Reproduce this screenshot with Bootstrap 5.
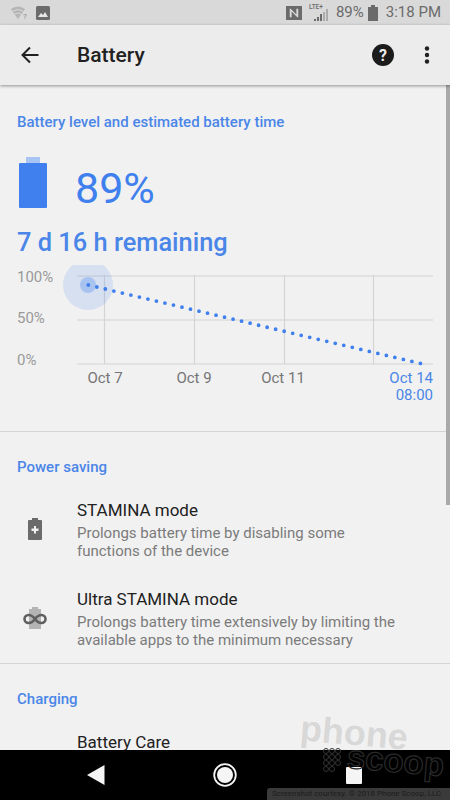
<!DOCTYPE html>
<html lang="en">
<head>
    <meta charset="UTF-8">
    <meta name="viewport" content="width=device-width, initial-scale=1.0">
    <title>Battery</title>
    <link href="https://cdn.jsdelivr.net/npm/bootstrap@5.3.0/dist/css/bootstrap.min.css" rel="stylesheet">
    <script src="https://cdn.jsdelivr.net/npm/bootstrap@5.3.0/dist/js/bootstrap.bundle.min.js"></script>
    <style>
        html, body {
            height: 100%;
            overflow: hidden;
        }

        body {
            font-family: Roboto, "Liberation Sans", sans-serif;
            background: #f1f1f1;
        }

        .phone-screen {
            width: 450px;
            height: 800px;
        }

        /* Status bar */
        .status-strip {
            height: 25px;
            background: #d9d9d9;
            color: #6b6b6b;
            font-size: 15px;
            padding: 0 9px 0 11px;
        }

        .nfc-mark {
            margin-right: 7px;
        }

        .signal-box {
            width: 19px;
            height: 17px;
        }

        .lte-tag {
            font-size: 6.5px;
            font-weight: 500;
            line-height: 1;
        }

        /* App bar */
        .app-strip {
            height: 60px;
            background: #ececec;
            box-shadow: 0 1px 3px rgba(0, 0, 0, .4);
            z-index: 2;
            padding: 0 20px 0 21px;
        }

        .app-name {
            font-size: 21px;
            font-weight: 500;
            color: #212121;
            margin-left: 38px;
            margin-top: 2px;
        }

        .overflow-dots {
            margin-left: 30px;
        }

        /* Content */
        .settings-pane {
            min-height: 0;
            overflow: hidden;
        }

        .scroll-thumb {
            top: 85px;
            right: 0;
            width: 4px;
            height: 420px;
            background: #a9a9a9;
            z-index: 1;
        }

        .group-head {
            font-size: 15px;
            font-weight: 500;
            color: #4a86e8;
            line-height: 20px;
            padding-left: 17px;
            margin-top: 25px;
        }

        .group-head-first {
            margin-top: 27px;
        }

        .level-row {
            height: 52px;
            margin-top: 25px;
            padding-left: 19px;
        }

        .level-num {
            font-size: 43px;
            color: #3f80ee;
            line-height: 52px;
            margin-left: 28px;
            margin-top: 5px;
        }

        .remain-text {
            font-size: 25.4px;
            font-weight: 500;
            color: #4a86e8;
            line-height: 30px;
            padding-left: 17px;
            margin-top: 18px;
        }

        .chart-box {
            display: block;
            margin-top: 3px;
        }

        .chart-box text {
            font-family: Roboto, "Liberation Sans", sans-serif;
            font-size: 15px;
        }

        .group-rule {
            border-top: 1px solid #d4d4d4;
        }

        .rule-after-chart {
            margin-top: 21px;
        }

        .pref-row {
            height: 89px;
            margin-top: 22px;
        }

        .pref-row-last {
            height: 75px;
            margin-top: 0;
        }

        .pref-icon {
            width: 77px;
            flex: none;
            padding-top: 19px;
        }

        .pref-title {
            font-size: 17px;
            color: #212121;
            line-height: 22px;
        }

        .pref-title-solo {
            margin-top: 22px;
            padding-left: 77px;
        }

        .pref-desc {
            font-size: 15px;
            color: #7b7b7b;
            line-height: 17.5px;
            margin-top: 4px;
        }

        /* Bottom navigation */
        .nav-strip {
            height: 50px;
            background: #000;
            z-index: 2;
            padding-left: 87px;
        }

        .nav-home {
            margin-left: 108px;
        }

        .nav-recent {
            margin-left: 109px;
        }

        /* Watermark */
        .mark-phone, .mark-scoop {
            font-family: "Liberation Sans", sans-serif;
            font-weight: 700;
            line-height: 1;
            transform: rotate(5deg);
            z-index: 3;
            white-space: nowrap;
        }

        .mark-phone {
            top: 715px;
            left: 300px;
            font-size: 36px;
            color: rgba(130, 130, 130, .24);
        }

        .mark-scoop {
            top: 744px;
            left: 347px;
            font-size: 33px;
            color: transparent;
            -webkit-text-stroke: 1.2px #2a2a2a;
        }

        .mark-dots {
            top: 748px;
            left: 323px;
            z-index: 3;
        }

        .mark-line {
            left: 267px;
            right: 0;
            bottom: 0;
            height: 12px;
            background: #3a3a3a;
            border-top-left-radius: 3px;
            color: #1c1c1c;
            font-size: 8px;
            line-height: 12px;
            padding-left: 5px;
            z-index: 4;
            white-space: nowrap;
        }
    </style>
</head>
<body>
    <div class="phone-screen position-relative d-flex flex-column overflow-hidden">

        <!-- Status bar -->
        <div class="status-strip d-flex align-items-center flex-shrink-0">
            <svg width="17" height="14" viewBox="0 0 17 14">
                <path d="M0 3 Q7 -2 14 3 L7 13Z" fill="#b5b5b5"/>
                <path d="M2 5 Q7 2 12 5M4 8 Q7 6 10 8" stroke="#d9d9d9" fill="none"/>
                <text x="12" y="13" font-size="8" fill="#8a8a8a">?</text>
            </svg>
            <svg class="ms-2" width="14" height="14" viewBox="0 0 14 14">
                <rect width="14" height="14" rx="1.5" fill="#6b6b6b"/>
                <path d="M2 11 L5 7 L7 9 L9 6 L12 11Z" fill="#e6e6e6"/>
            </svg>
            <svg class="nfc-mark ms-auto" width="16" height="16" viewBox="0 0 17 17">
                <path d="M0 1 H17 V16 H0Z M4 4 V13 H6 V7 L12 13 H13 V4 H11 V10 L5 4Z" fill="#6b6b6b" fill-rule="evenodd"/>
            </svg>
            <span class="signal-box position-relative d-inline-flex">
                <span class="lte-tag position-absolute top-0 start-0">LTE+</span>
                <svg class="position-absolute bottom-0 end-0" width="14" height="12" viewBox="0 0 14 12">
                    <path d="M0 12 V10 H2 V12Z M3 12 V8 H5 V12Z M6 12 V5 H8 V12Z" fill="#6b6b6b"/>
                    <path d="M9 12 V3 H11 V12Z M12 12 V0 H14 V12Z" fill="#ababab"/>
                </svg>
            </span>
            <span class="ms-2">89%</span>
            <svg class="ms-1" width="10" height="16" viewBox="0 0 10 16">
                <path d="M3 0 H7 V2 H10 V16 H0 V2 H3Z" fill="#6b6b6b"/>
            </svg>
            <span class="ms-2">3:18 PM</span>
        </div>

        <!-- App bar -->
        <div class="app-strip d-flex align-items-center flex-shrink-0 position-relative">
            <svg width="18" height="18" viewBox="0 0 18 18">
                <path d="M17.5 9 H2 M9 1.5 L1.5 9 L9 16.5" fill="none" stroke="#212121" stroke-width="2"/>
            </svg>
            <span class="app-name">Battery</span>
            <svg class="ms-auto" width="22" height="22" viewBox="0 0 22 22">
                <circle cx="11" cy="11" r="11" fill="#1b1b1b"/>
                <text x="11" y="16.5" text-anchor="middle" font-size="16" font-weight="700" font-family="Roboto, sans-serif" fill="#ececec">?</text>
            </svg>
            <svg class="overflow-dots" width="6" height="18" viewBox="0 0 6 18">
                <circle cx="3" cy="2.5" r="2.2" fill="#212121"/>
                <circle cx="3" cy="9" r="2.2" fill="#212121"/>
                <circle cx="3" cy="15.5" r="2.2" fill="#212121"/>
            </svg>
        </div>

        <div class="scroll-thumb position-absolute"></div>

        <!-- Settings content -->
        <div class="settings-pane flex-grow-1">
            <div class="group-head group-head-first">Battery level and estimated battery time</div>

            <div class="level-row d-flex align-items-start">
                <svg width="28" height="52" viewBox="0 0 28 52">
                    <rect x="7" y="0" width="14" height="7" fill="#a8c4f4"/>
                    <rect x="0" y="6" width="28" height="45" rx="1" fill="#3f80ee"/>
                </svg>
                <span class="level-num">89%</span>
            </div>

            <div class="remain-text">7 d 16 h remaining</div>

            <!-- Usage chart -->
            <svg class="chart-box" width="450" height="150" viewBox="0 260 450 150">
                <defs>
                    <clipPath id="haloClip"><rect x="0" y="265" width="450" height="60"/></clipPath>
                </defs>
                <g stroke="#d4d4d4" stroke-width="1.2">
                    <path d="M77 276 H433 M77 320 H433 M77 364 H433"/>
                    <path d="M104.5 275 V364 M194.5 275 V364 M284.5 275 V364 M373.5 275 V364"/>
                </g>
                <circle cx="88" cy="285" r="25" fill="#3f80ee" fill-opacity=".15" clip-path="url(#haloClip)"/>
                <circle cx="88" cy="285" r="8" fill="#3f80ee" fill-opacity=".3"/>
                <line x1="88.3" y1="285" x2="421" y2="363.6" stroke="#3f80ee" stroke-width="3.8" stroke-linecap="round" stroke-dasharray="0 8.75"/>
                <g fill="#9a9a9a">
                    <text x="17" y="282">100%</text>
                    <text x="17" y="323">50%</text>
                    <text x="17" y="365">0%</text>
                </g>
                <g fill="#757575" text-anchor="middle">
                    <text x="105" y="383">Oct 7</text>
                    <text x="194" y="383">Oct 9</text>
                    <text x="283" y="383">Oct 11</text>
                </g>
                <g fill="#4a86e8" text-anchor="end">
                    <text x="433" y="383">Oct 14</text>
                    <text x="433" y="400">08:00</text>
                </g>
            </svg>

            <div class="group-rule rule-after-chart"></div>

            <div class="group-head">Power saving</div>

            <div class="pref-row d-flex">
                <div class="pref-icon d-flex justify-content-center pe-2">
                    <svg width="14" height="22" viewBox="0 0 14 22">
                        <path d="M4 0 H10 V2 H13 Q14 2 14 3 V21 Q14 22 13 22 H1 Q0 22 0 21 V3 Q0 2 1 2 H4Z M6 8 V10.5 H3.5 V13 H6 V15.5 H8 V13 H10.5 V10.5 H8 V8Z" fill="#6b6b6b" fill-rule="evenodd"/>
                    </svg>
                </div>
                <div>
                    <div class="pref-title">STAMINA mode</div>
                    <div class="pref-desc">Prolongs battery time by disabling some<br>functions of the device</div>
                </div>
            </div>

            <div class="pref-row pref-row-last d-flex">
                <div class="pref-icon d-flex justify-content-center pe-2">
                    <svg width="24" height="22" viewBox="0 0 24 22">
                        <path d="M9 0 H15 V2 H18 V22 H6 V2 H9Z" fill="#b4b4b4"/>
                        <path d="M12 12 C9 8 7.5 8 5.5 8 A4 4 0 0 0 5.5 16 C7.5 16 9 16 12 12 C15 8 16.5 8 18.5 8 A4 4 0 0 1 18.5 16 C16.5 16 15 16 12 12Z" fill="none" stroke="#5f5f5f" stroke-width="2.6"/>
                    </svg>
                </div>
                <div>
                    <div class="pref-title">Ultra STAMINA mode</div>
                    <div class="pref-desc">Prolongs battery time extensively by limiting the<br>available apps to the minimum necessary</div>
                </div>
            </div>

            <div class="group-rule"></div>

            <div class="group-head">Charging</div>

            <div class="pref-title pref-title-solo">Battery Care</div>
        </div>

        <!-- Bottom navigation -->
        <div class="nav-strip d-flex align-items-center flex-shrink-0 position-relative">
            <svg width="18" height="20" viewBox="0 0 18 20">
                <path d="M17.5 0 V20 L0 10Z" fill="#f5f5f5"/>
            </svg>
            <svg class="nav-home" width="24" height="24" viewBox="0 0 24 24">
                <circle cx="12" cy="12" r="10.8" fill="none" stroke="#f5f5f5" stroke-width="1.8"/>
                <circle cx="12" cy="12" r="8" fill="#f5f5f5"/>
            </svg>
            <svg class="nav-recent" width="16" height="17" viewBox="0 0 16 17">
                <rect width="16" height="17" rx="1" fill="#f5f5f5"/>
            </svg>
        </div>

        <!-- Watermark -->
        <div class="mark-phone position-absolute">phone</div>
        <div class="mark-scoop position-absolute">scoop</div>
        <svg class="mark-dots position-absolute" width="20" height="26" viewBox="0 0 20 26">
            <g fill="none" stroke="#333">
                <circle cx="3" cy="3" r="2.5"/><circle cx="9" cy="3" r="2.5"/><circle cx="15" cy="3" r="2.5"/>
                <circle cx="3" cy="9" r="2.5"/><circle cx="9" cy="9" r="2.5"/><circle cx="15" cy="9" r="2.5"/>
                <circle cx="3" cy="15" r="2.5"/><circle cx="9" cy="15" r="2.5"/><circle cx="15" cy="15" r="2.5"/>
                <circle cx="3" cy="21" r="2.5"/><circle cx="9" cy="21" r="2.5"/>
            </g>
        </svg>
        <div class="mark-line position-absolute">Screenshot courtesy. &copy; 2018 Phone Scoop, LLC</div>
    </div>
</body>
</html>
